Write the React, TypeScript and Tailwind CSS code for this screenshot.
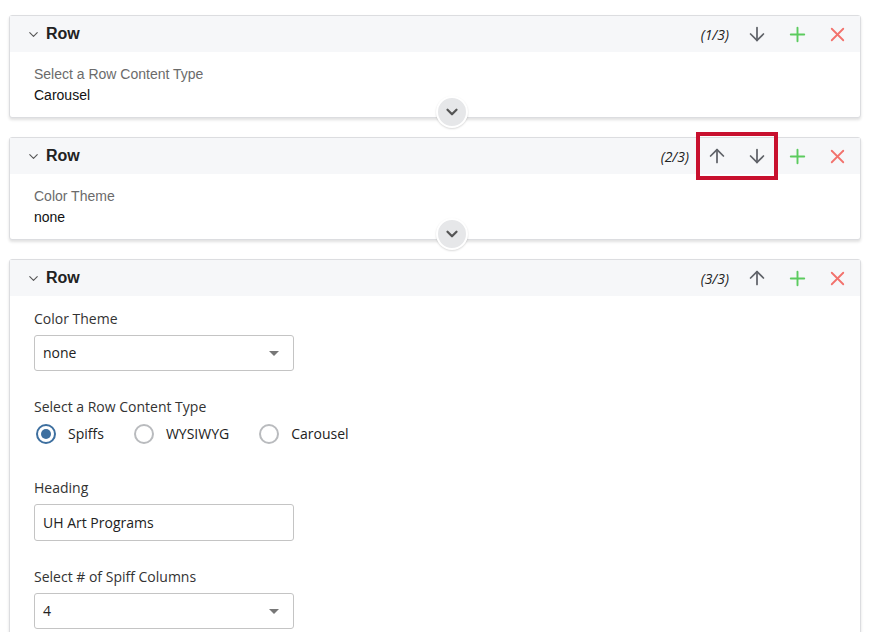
import { ArrowDown, ArrowUp, ChevronDown, Plus, X } from "lucide-react";
import type { ReactNode } from "react";

const sans = { fontFamily: '"Liberation Sans", Arial, sans-serif' };
const open = { fontFamily: '"Open Sans", "Liberation Sans", sans-serif' };

type HeaderProps = {
  index: number;
  total: number;
  highlight?: boolean;
};

const IconBtn = ({ children }: { children: ReactNode }) => (
  <button className="flex h-9 w-10 items-center justify-center">{children}</button>
);

const PanelHeader = ({ index, total, highlight }: HeaderProps) => {
  const up = index > 1;
  const down = index < total;
  return (
    <div className="flex h-9 items-center bg-[#f6f7f9] pl-[16px] pr-[3px]">
      <ChevronDown size={15} strokeWidth={1.75} className="text-[#555]" />
      <span className="ml-[5px] text-[16px] font-bold text-[#222]" style={sans}>
        Row
      </span>
      <span className="ml-auto mr-2 text-[14px] italic text-[#222]" style={open}>
        ({index}/{total})
      </span>
      <div className="relative flex">
        {up && (
          <IconBtn>
            <ArrowUp size={22} strokeWidth={1.9} className="text-[#5f6268]" />
          </IconBtn>
        )}
        {down && (
          <IconBtn>
            <ArrowDown size={22} strokeWidth={1.9} className="text-[#5f6268]" />
          </IconBtn>
        )}
        {highlight && (
          <div className="pointer-events-none absolute -inset-y-[6px] -left-px -right-px border-4 border-[#c8102e]" />
        )}
      </div>
      <IconBtn>
        <Plus size={23} strokeWidth={2} className="text-[#5ccb5f]" />
      </IconBtn>
      <IconBtn>
        <X size={23} strokeWidth={1.9} className="text-[#f2726d]" />
      </IconBtn>
    </div>
  );
};

const Collapsed = ({
  index,
  label,
  value,
  highlight,
}: {
  index: number;
  label: string;
  value: string;
  highlight?: boolean;
}) => (
  <div className="relative rounded-[3px] border border-[#dcdde0] bg-white shadow-[0_2px_3px_rgba(0,0,0,0.12)]">
    <PanelHeader index={index} total={3} highlight={highlight} />
    <div className="px-6 pb-[12px] pt-[12px] text-[14px] leading-5" style={sans}>
      <div className="text-[#6b6b6b]">{label}</div>
      <div className="mt-px text-[#111]">{value}</div>
    </div>
    <button className="absolute -bottom-[11px] left-[426px] flex h-8 w-8 items-center justify-center rounded-full border-2 border-white bg-[#e6e7e9] shadow-[0_1px_2px_rgba(0,0,0,0.15)]">
      <ChevronDown size={18} strokeWidth={3} className="text-[#555]" />
    </button>
  </div>
);

const Select = ({ value }: { value: string }) => (
  <div className="mt-[6px] flex h-9 w-[260px] items-center rounded-[3px] border border-[#c4c4c4] bg-white pl-2 pr-[14px] text-[14px] text-[#222]">
    <span>{value}</span>
    <span className="ml-auto h-0 w-0 border-x-[5px] border-t-[5px] border-x-transparent border-t-[#777]" />
  </div>
);

const Radio = ({ label, checked }: { label: string; checked?: boolean }) => (
  <label className="flex items-center">
    <span
      className={
        checked
          ? "flex h-5 w-5 items-center justify-center rounded-full border-2 border-[#3d6f9f]"
          : "h-5 w-5 rounded-full border-2 border-[#b9bbbe]"
      }
    >
      {checked && <span className="h-[10px] w-[10px] rounded-full bg-[#3d6f9f]" />}
    </span>
    <span className="ml-[12px] text-[14px] text-[#222]">{label}</span>
  </label>
);

export default function App() {
  return (
    <div className="min-h-screen bg-white pt-[15px]">
      <div className="ml-[9px] flex w-[852px] flex-col gap-[19px]">
        <Collapsed index={1} label="Select a Row Content Type" value="Carousel" />
        <Collapsed index={2} label="Color Theme" value="none" highlight />
        <div className="rounded-[3px] border border-[#dcdde0] bg-white shadow-[0_2px_3px_rgba(0,0,0,0.12)]">
          <PanelHeader index={3} total={3} />
          <div className="px-6 pb-6 pt-[13px] text-[14px] leading-5 text-[#333]" style={open}>
            <div>Color Theme</div>
            <Select value="none" />
            <div className="mt-[26px]">Select a Row Content Type</div>
            <div className="mt-[7px] flex items-center gap-[30px] pl-[2px]">
              <Radio label="Spiffs" checked />
              <Radio label="WYSIWYG" />
              <Radio label="Carousel" />
            </div>
            <div className="mt-[34px]">Heading</div>
            <div className="mt-[6px] flex h-[37px] w-[260px] items-center rounded-[3px] border border-[#c4c4c4] bg-white pl-2 text-[14px] text-[#222]">
              UH Art Programs
            </div>
            <div className="mt-[26px]">Select # of Spiff Columns</div>
            <Select value="4" />
          </div>
        </div>
      </div>
    </div>
  );
}
